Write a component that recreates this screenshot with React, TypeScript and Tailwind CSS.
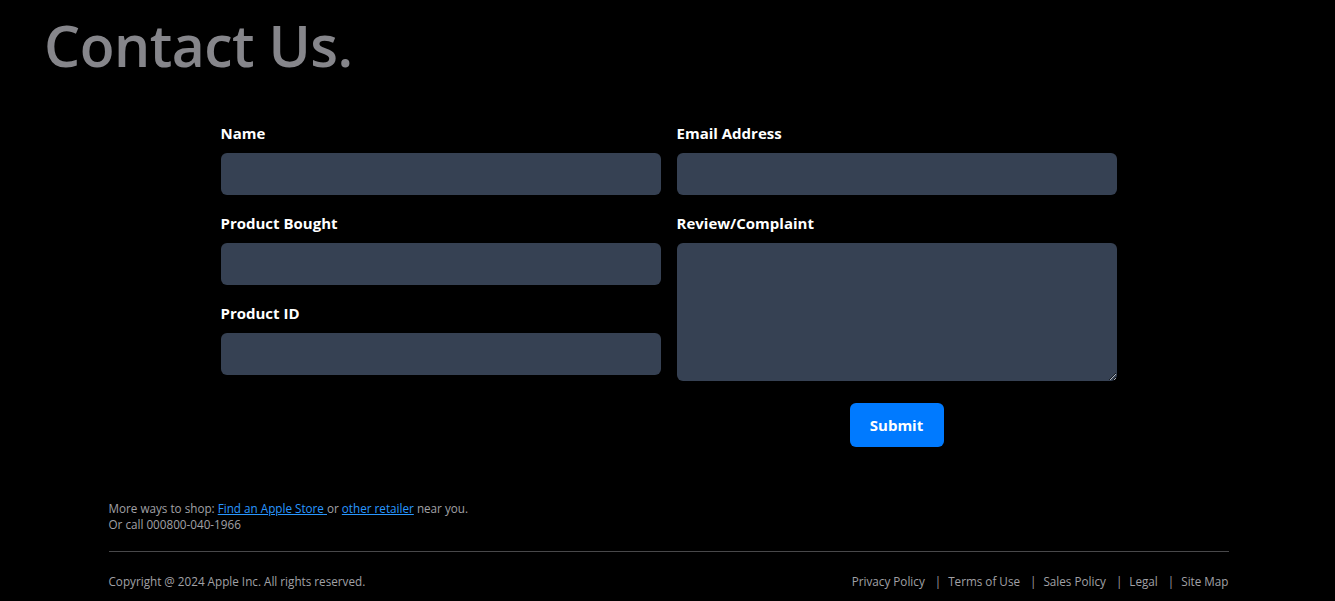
const fieldLabel = "mb-[10px] block text-[15px] font-bold leading-5 text-white";
const fieldInput =
  "block h-[42px] w-full rounded-md bg-gray-700 px-3 text-white outline-none";

export default function App() {
  return (
    <div className="min-h-screen bg-black font-['Open_Sans',sans-serif]">
      <header className="px-[44px] pt-[10px]">
        <h1 className="text-[57px] font-semibold leading-[71px] tracking-[-0.5px] text-[#86868b]">
          Contact Us.
        </h1>
      </header>

      <form
        className="mx-auto mt-[42px] grid w-[896px] translate-x-[1px] grid-cols-2 gap-x-4"
        onSubmit={(e) => e.preventDefault()}
      >
        <div className="flex flex-col gap-[18px]">
          <div>
            <label className={fieldLabel}>Name</label>
            <input type="text" className={fieldInput} />
          </div>
          <div>
            <label className={fieldLabel}>Product Bought</label>
            <input type="text" className={fieldInput} />
          </div>
          <div>
            <label className={fieldLabel}>Product ID</label>
            <input type="text" className={fieldInput} />
          </div>
        </div>

        <div className="flex flex-col gap-[18px]">
          <div>
            <label className={fieldLabel}>Email Address</label>
            <input type="email" className={fieldInput} />
          </div>
          <div>
            <label className={fieldLabel}>Review/Complaint</label>
            <textarea className="block h-[138px] w-full rounded-md bg-gray-700 px-3 py-2 text-white outline-none" />
          </div>
          <div className="mt-[4px] flex justify-center">
            <button
              type="submit"
              className="h-11 w-[94px] rounded-md bg-[#007aff] text-[15px] font-bold text-white"
            >
              Submit
            </button>
          </div>
        </div>
      </form>

      <footer className="mx-auto mt-[53px] w-[1120px] translate-x-[1px] text-[11.7px] leading-4 text-[#a1a1a6]">
        <p>
          More ways to shop:{" "}
          <a href="#" className="text-[#2997ff] underline">
            Find an Apple Store{" "}
          </a>
          or{" "}
          <a href="#" className="text-[#2997ff] underline">
            other retailer
          </a>{" "}
          near you.
        </p>
        <p>Or call 000800-040-1966</p>
        <hr className="mt-[19px] border-[#48484a]" />
        <div className="flex items-center justify-between py-[21px]">
          <span>Copyright @ 2024 Apple Inc. All rights reserved.</span>
          <nav className="flex items-center">
            <a href="#">Privacy Policy</a>
            <span className="pl-[10px] pr-[7px] text-[#a1a1a6]">|</span>
            <a href="#">Terms of Use</a>
            <span className="pl-[10px] pr-[7px] text-[#a1a1a6]">|</span>
            <a href="#">Sales Policy</a>
            <span className="pl-[10px] pr-[7px] text-[#a1a1a6]">|</span>
            <a href="#">Legal</a>
            <span className="pl-[10px] pr-[7px] text-[#a1a1a6]">|</span>
            <a href="#">Site Map</a>
          </nav>
        </div>
      </footer>
    </div>
  );
}
